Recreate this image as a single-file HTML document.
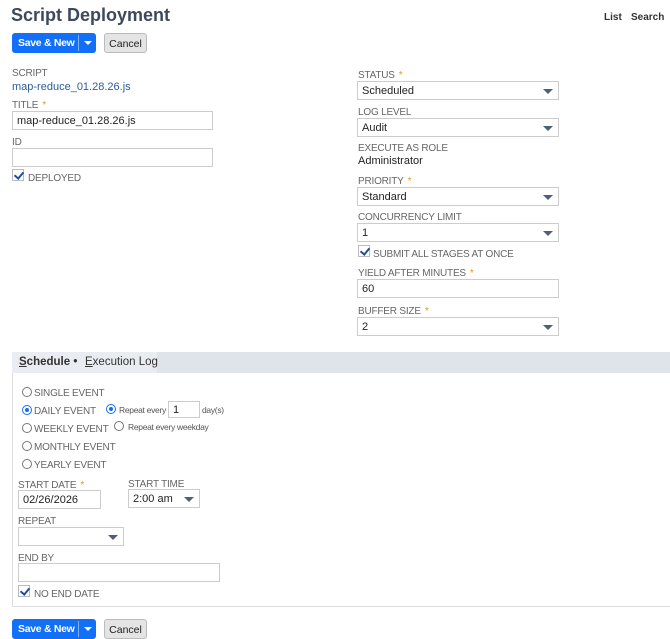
<!DOCTYPE html>
<html><head><style>
*{margin:0;padding:0;box-sizing:border-box}
body{width:670px;height:639px;background:#fff;font-family:"Liberation Sans",sans-serif;position:relative;overflow:hidden;color:#222}
.a{position:absolute}
.lbl{position:absolute;font-size:10px;color:#666;text-transform:uppercase;letter-spacing:-0.2px}
.req{color:#e09a1b;margin-left:4px}
.inp{position:absolute;height:19px;border:1px solid #ccc;background:#fff;font-size:11px;padding:3px 4px 0;color:#222;line-height:13px}
.sel::after{content:"";position:absolute;right:5px;top:7px;border-left:5px solid transparent;border-right:5px solid transparent;border-top:5px solid #4d5f79}
.btn{position:absolute;height:20px;border-radius:3px;font-size:10.5px;font-weight:bold}
.save{background:#1170f7;color:#fff;width:84px}
.save span{position:absolute;left:6px;top:4px;letter-spacing:-0.3px}
.save i{position:absolute;left:66px;top:2px;height:16px;border-left:1px solid #7fb0fb}
.save b{position:absolute;left:72px;top:8px;border-left:4px solid transparent;border-right:4px solid transparent;border-top:4px solid #fff}
.cancel{background:#e4e4e4;border:1px solid #bbb;width:43px;color:#222;font-weight:normal;text-align:center;padding-top:4px;font-size:10.5px}
.cb{position:absolute;width:12px;height:12px;border:1px solid #bbb;background:#fff}
.cb::after{content:"";position:absolute;left:3px;top:0px;width:4px;height:7px;border-right:2px solid #1e4f9a;border-bottom:2px solid #1e4f9a;transform:rotate(40deg)}
.rad{position:absolute;width:10px;height:10px;border:1px solid #777;border-radius:50%;background:#fff}
.rad.on{border-color:#1170f7}
.rad.on::after{content:"";position:absolute;left:2px;top:2px;width:4px;height:4px;border-radius:50%;background:#1170f7}
.rt{position:absolute;font-size:8.5px;color:#555;letter-spacing:-0.3px}
</style></head><body>
<div class="a" style="left:11px;top:5px;font-size:18px;font-weight:bold;color:#3d4a5c">Script Deployment</div>
<div class="a" style="left:604px;top:12px;font-size:10px;font-weight:bold;color:#333">List</div>
<div class="a" style="left:631px;top:12px;font-size:10px;font-weight:bold;color:#333">Search</div>
<div class="btn save" style="left:12px;top:33px"><span>Save &amp; New</span><i></i><b></b></div>
<div class="btn cancel" style="left:104px;top:33px">Cancel</div>

<div class="lbl" style="left:12px;top:68px">Script</div>
<div class="a" style="left:12px;top:81px;font-size:11px;color:#2c5d95">map-reduce_01.28.26.js</div>
<div class="lbl" style="left:12px;top:100px">Title<span class="req">*</span></div>
<div class="inp" style="left:12px;top:111px;width:201px">map-reduce_01.28.26.js</div>
<div class="lbl" style="left:12px;top:137px">ID</div>
<div class="inp" style="left:12px;top:148px;width:201px"></div>
<div class="cb" style="left:12px;top:169px"></div>
<div class="lbl" style="left:28px;top:173px">Deployed</div>

<div class="lbl" style="left:358px;top:70px">Status<span class="req">*</span></div>
<div class="inp sel" style="left:357px;top:81px;width:202px">Scheduled</div>
<div class="lbl" style="left:358px;top:107px">Log Level</div>
<div class="inp sel" style="left:357px;top:118px;width:202px">Audit</div>
<div class="lbl" style="left:358px;top:143px">Execute as Role</div>
<div class="a" style="left:358px;top:155px;font-size:11px">Administrator</div>
<div class="lbl" style="left:358px;top:176px">Priority<span class="req">*</span></div>
<div class="inp sel" style="left:357px;top:187px;width:202px">Standard</div>
<div class="lbl" style="left:358px;top:212px">Concurrency Limit</div>
<div class="inp sel" style="left:357px;top:223px;width:202px">1</div>
<div class="cb" style="left:358px;top:245px"></div>
<div class="lbl" style="left:373px;top:249px">Submit all stages at once</div>
<div class="lbl" style="left:358px;top:268px">Yield after minutes<span class="req">*</span></div>
<div class="inp" style="left:357px;top:279px;width:202px">60</div>
<div class="lbl" style="left:358px;top:306px">Buffer size<span class="req">*</span></div>
<div class="inp sel" style="left:357px;top:317px;width:202px">2</div>

<div class="a" style="left:12px;top:352px;width:658px;height:21px;background:#dfe4eb"></div>
<div class="a" style="left:12px;top:352px;width:145px;height:21px;background:#e9ecf0"></div>
<div class="a" style="left:19px;top:356px;font-size:11.5px;font-weight:bold;color:#333"><u>S</u>chedule •</div>
<div class="a" style="left:85px;top:356px;font-size:11.5px;color:#333"><u>E</u>xecution Log</div>
<div class="a" style="left:12px;top:373px;width:660px;height:234px;border-left:1px solid #ddd;border-bottom:1px solid #ddd"></div>

<div class="rad" style="left:22px;top:387px"></div><div class="lbl" style="left:34px;top:388px">Single Event</div>
<div class="rad on" style="left:22px;top:405px"></div><div class="lbl" style="left:34px;top:406px">Daily Event</div>
<div class="rad" style="left:22px;top:423px"></div><div class="lbl" style="left:34px;top:424px">Weekly Event</div>
<div class="rad" style="left:22px;top:441px"></div><div class="lbl" style="left:34px;top:442px">Monthly Event</div>
<div class="rad" style="left:22px;top:459px"></div><div class="lbl" style="left:34px;top:460px">Yearly Event</div>
<div class="rad on" style="left:106px;top:404px"></div><div class="rt" style="left:119px;top:405px">Repeat every</div>
<div class="inp" style="left:168px;top:401px;width:32px;height:17px;padding:2px 4px 0">1</div>
<div class="rt" style="left:202px;top:405px">day(s)</div>
<div class="rad" style="left:114px;top:421px"></div><div class="rt" style="left:128px;top:422px">Repeat every weekday</div>

<div class="lbl" style="left:18px;top:480px">Start Date<span class="req">*</span></div>
<div class="inp" style="left:18px;top:490px;width:83px">02/26/2026</div>
<div class="lbl" style="left:128px;top:479px">Start Time</div>
<div class="inp sel" style="left:128px;top:489px;width:72px">2:00 am</div>
<div class="lbl" style="left:18px;top:516px">Repeat</div>
<div class="inp sel" style="left:18px;top:527px;width:106px"></div>
<div class="lbl" style="left:18px;top:553px">End By</div>
<div class="inp" style="left:18px;top:563px;width:202px"></div>
<div class="cb" style="left:18px;top:585px"></div>
<div class="lbl" style="left:34px;top:589px">No End Date</div>

<div class="btn save" style="left:12px;top:619px"><span>Save &amp; New</span><i></i><b></b></div>
<div class="btn cancel" style="left:104px;top:619px">Cancel</div>
</body></html>
